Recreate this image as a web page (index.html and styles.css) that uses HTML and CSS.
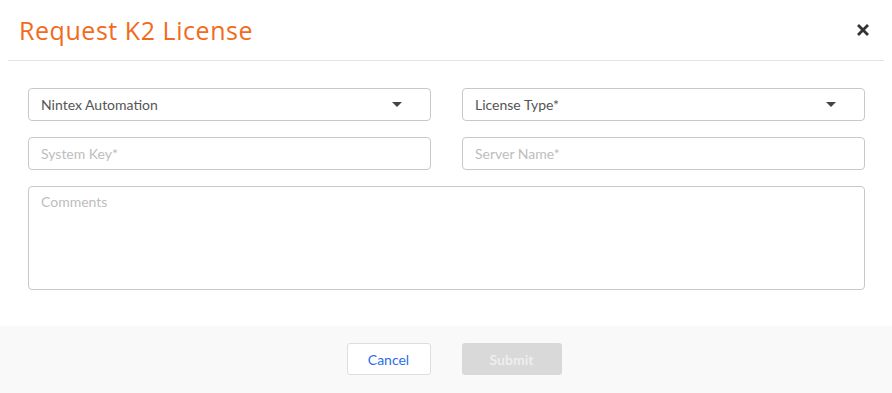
FILE: index.html
```html
<!DOCTYPE html>
<html>
  <head>
    <meta charset="UTF-8">
    <title>Request K2 License</title>
    <link rel="stylesheet" href="styles.css">
  </head>

  <body>
    <div id="modal">
      <div class="modal__header">
        <div class="modal__title">Request K2 License</div>
        <button class="modal__close" title="Close">
          <svg width="12" height="12" viewBox="0 0 12 12">
            <path d="M2 2 L10 10 M10 2 L2 10" stroke="#333" stroke-width="2.8" stroke-linecap="square"/>
          </svg>
        </button>
      </div>

      <div class="modal__body">
        <div class="row">
          <div class="field select">
            <span class="value">Nintex Automation</span>
            <span class="caret"></span>
          </div>
          <div class="field select">
            <span class="value">License Type*</span>
            <span class="caret"></span>
          </div>
        </div>
        <div class="row">
          <input class="field" type="text" placeholder="System Key*">
          <input class="field" type="text" placeholder="Server Name*">
        </div>
        <textarea class="field comments" placeholder="Comments"></textarea>
      </div>

      <div class="modal__footer">
        <button class="btn btn--cancel">Cancel</button>
        <button class="btn btn--submit" disabled>Submit</button>
      </div>
    </div>
  </body>
</html>
```

FILE: styles.css
```css
* {
  font-family: Lato, 'Open Sans', sans-serif;
  box-sizing: border-box;
}
html, body {
  margin: 0;
  padding: 0;
  height: 100%;
  width: 100%;
  background: #fff;
}

#modal {
  display: flex;
  flex-direction: column;
  height: 100%;
}

.modal__header {
  display: flex;
  align-items: center;
  justify-content: space-between;
  height: 61px;
  margin: 0 8px;
  padding: 0 15px 0 11px;
  border-bottom: 1px solid #e3e3e3;
}
.modal__title {
  font-family: 'Open Sans', sans-serif;
  font-size: 25px;
  color: #f26b1d;
  letter-spacing: 0.55px;
  padding-bottom: 1px;
}
.modal__close {
  border: none;
  background: none;
  padding: 0;
  width: 12px;
  height: 12px;
  cursor: pointer;
  display: flex;
}

.modal__body {
  display: flex;
  flex-direction: column;
  gap: 16px;
  padding: 27px 27px 0 28px;
}
.row {
  display: flex;
  gap: 31px;
}
.field {
  flex: 1;
  height: 33px;
  border: 1px solid #c8c8c8;
  border-radius: 4px;
  padding: 0 12px;
  font-size: 14px;
  color: #555;
  background: #fff;
  outline: none;
}
.field::placeholder {
  color: #bdbdbd;
}
.select {
  display: flex;
  align-items: center;
  justify-content: space-between;
  padding-right: 28px;
}
.caret {
  width: 0;
  height: 0;
  border-left: 5px solid transparent;
  border-right: 5px solid transparent;
  border-top: 5px solid #444;
}
.comments {
  flex: none;
  height: 104px;
  padding-top: 6px;
  resize: none;
}

.modal__footer {
  margin-top: auto;
  height: 67px;
  background: #f9f9f9;
  display: grid;
  grid-template-columns: 1fr 1fr;
  column-gap: 31px;
  align-items: start;
  padding-top: 17px;
}
.btn {
  height: 32px;
  border-radius: 3px;
  font-size: 14px;
  cursor: pointer;
}
.btn--cancel {
  justify-self: end;
  width: 84px;
  background: #fff;
  border: 1px solid #dedede;
  color: #2a6ee8;
}
.btn--submit {
  justify-self: start;
  width: 100px;
  background: #d9d9d9;
  border: none;
  color: #eee;
  font-weight: bold;
  cursor: initial;
}
```
